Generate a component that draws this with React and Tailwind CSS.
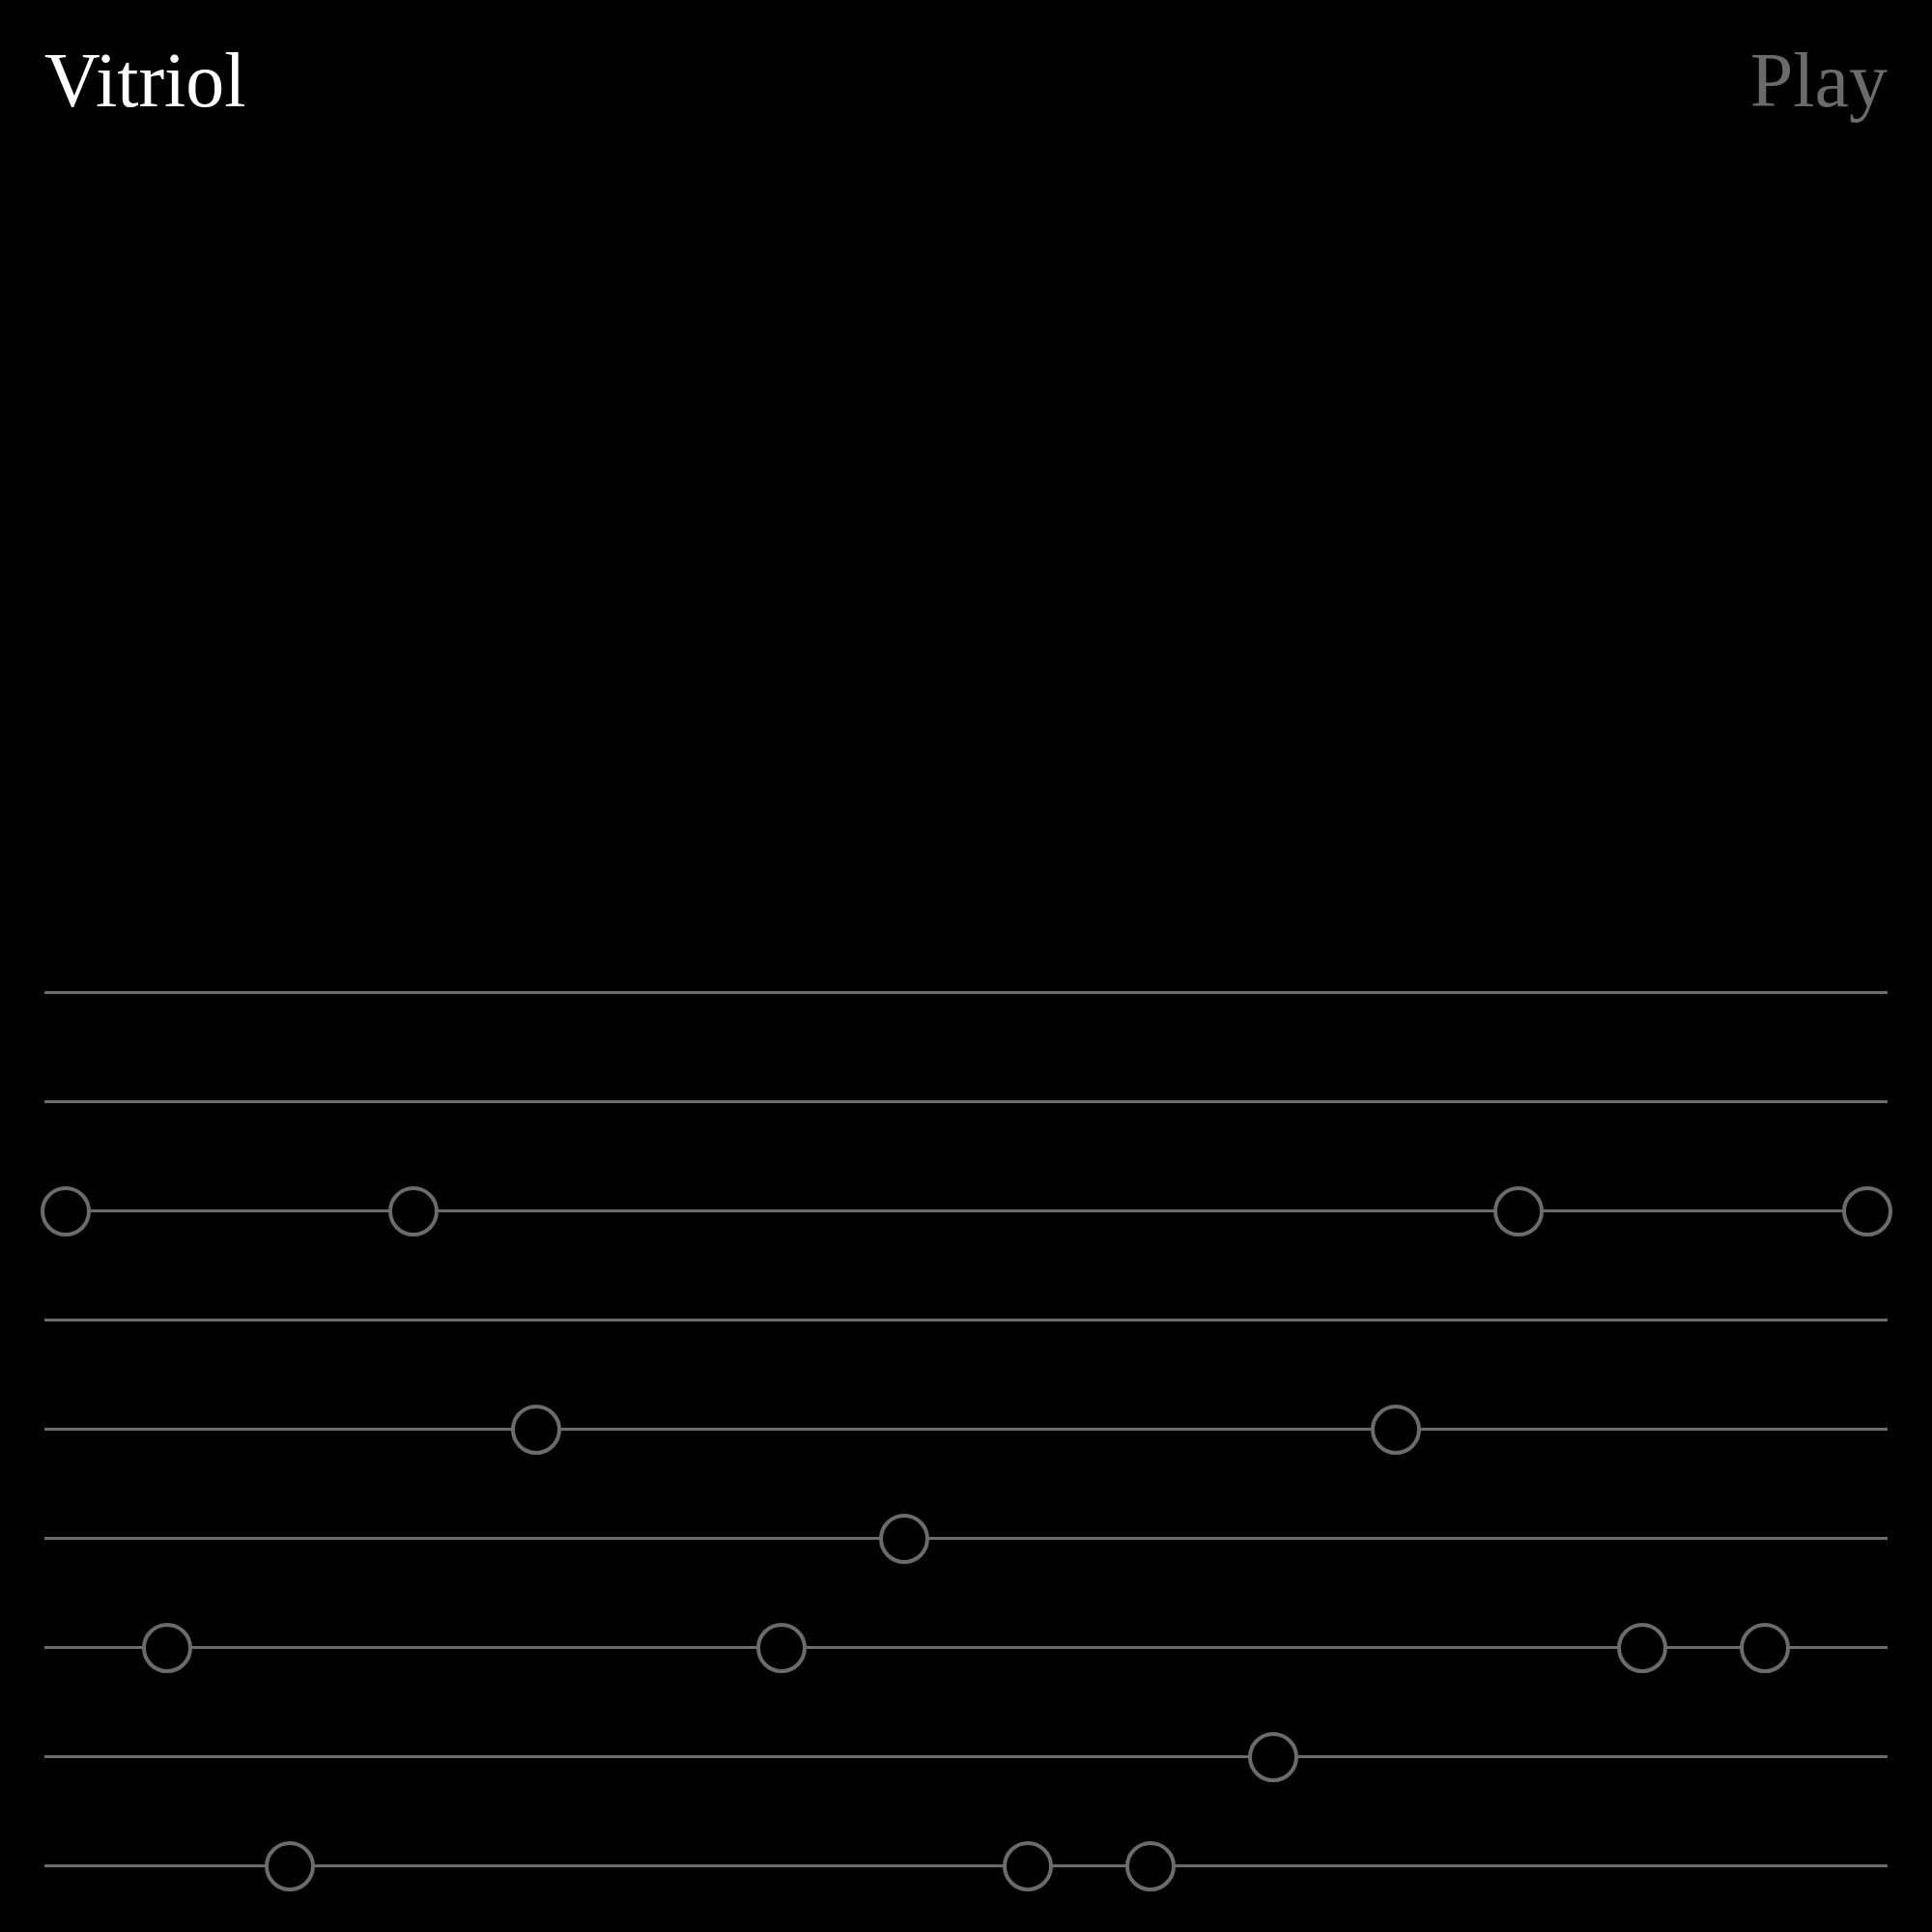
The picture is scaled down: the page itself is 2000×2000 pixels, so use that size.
import { useState } from "react";

const STEPS = 16;

// each track lists the steps that are switched on
const initialTracks = [
    [],
    [],
    [0, 3, 12, 15],
    [],
    [4, 11],
    [7],
    [1, 6, 13, 14],
    [10],
    [2, 8, 9],
];

const Track = ({ steps }) => {
    return (
        <div className="relative h-[113px] flex items-center">
            <div className="w-full h-[3px] bg-[#6b6b6b]" />
            {steps.map((step) => {
                const pct = (step / (STEPS - 1)) * 100;
                return (
                    <div
                        key={step}
                        className="absolute top-1/2 w-[52px] h-[52px] -translate-x-1/2 -translate-y-1/2 rounded-full border-4 border-[#6b6b6b] bg-black"
                        style={{ left: `clamp(22px, ${pct}%, calc(100% - 21px))` }}
                    />
                );
            })}
        </div>
    );
};

const App = () => {
    const [tracks] = useState(initialTracks);

    return (
        <div className="min-h-[2000px] bg-black flex flex-col px-[46px] pt-[43px] pb-[12px] font-['Liberation_Serif','Times_New_Roman',serif]">
            <header className="flex justify-between items-start">
                <h1 className="text-[80px] leading-none text-white font-normal">Vitriol</h1>
                <button className="text-[80px] leading-none text-[#6b6b6b] font-normal">Play</button>
            </header>
            <div className="mt-auto flex flex-col">
                {tracks.map((steps, i) => (
                    <Track key={i} steps={steps} />
                ))}
            </div>
        </div>
    );
};

export default App;
